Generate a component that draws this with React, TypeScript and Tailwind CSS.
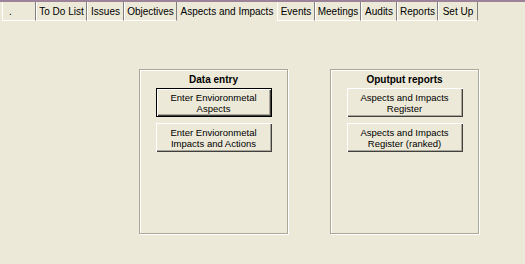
const tabs = [
  { label: ".", w: 34, left: true },
  { label: "To Do List", w: 51 },
  { label: "Issues", w: 37 },
  { label: "Objectives", w: 53 },
  { label: "Aspects and Impacts", w: 100, active: true },
  { label: "Events", w: 38 },
  { label: "Meetings", w: 46 },
  { label: "Audits", w: 36 },
  { label: "Reports", w: 41 },
  { label: "Set Up", w: 40 },
];

const WinButton = ({ lines, isDefault }: { lines: string[]; isDefault?: boolean }) => (
  <button
    className={
      "w-[116px] h-[29px] flex flex-col items-center justify-center leading-[11px] text-[9.5px] text-black bg-[#ece9d8] " +
      (isDefault
        ? "border border-black shadow-[inset_1px_1px_0_#fff,inset_-1px_-1px_0_#404040,inset_-2px_-2px_0_#aca899]"
        : "shadow-[inset_1px_1px_0_#fff,inset_-1px_-1px_0_#404040,inset_-2px_-2px_0_#aca899]")
    }
  >
    {lines.map((l) => (
      <span key={l}>{l}</span>
    ))}
  </button>
);

const Frame = ({ title, children }: { title: string; children: React.ReactNode }) => (
  <div className="w-[149px] h-[165px] border border-[#aca899] shadow-[inset_1px_1px_0_#fff,1px_1px_0_#fff] flex flex-col items-center pt-[3px]">
    <div className="font-bold text-[10px] leading-[14px] text-black">{title}</div>
    <div className="flex flex-col gap-[6px] mt-[1px]">{children}</div>
  </div>
);

export default function App() {
  return (
    <div
      className="w-[525px] h-[264px] bg-[#ece9d8] overflow-hidden"
      style={{ fontFamily: '"Liberation Sans", Arial, sans-serif' }}
    >
      <div className="h-[2px] bg-[#9d8399]" />
      <div className="flex h-[19px] pl-[2px]">
        {tabs.map((t) => (
          <div
            key={t.label}
            style={{ width: t.w }}
            className={
              "h-full flex items-center text-[10px] text-black whitespace-nowrap " +
              (t.active
                ? "justify-center"
                : t.left
                  ? "pl-[6px] border-l border-white border-r border-r-[#808080] border-b border-b-white"
                  : "justify-center border-l border-white border-r border-r-[#808080] border-b border-b-white")
            }
          >
            {t.label}
          </div>
        ))}
      </div>
      <div className="flex gap-[42px] pl-[139px] pt-[48px]">
        <Frame title="Data entry">
          <WinButton lines={["Enter Envioronmetal", "Aspects"]} isDefault />
          <WinButton lines={["Enter Envioronmetal", "Impacts and Actions"]} />
        </Frame>
        <Frame title="Oputput reports">
          <WinButton lines={["Aspects and Impacts", "Register"]} />
          <WinButton lines={["Aspects and Impacts", "Register (ranked)"]} />
        </Frame>
      </div>
    </div>
  );
}
